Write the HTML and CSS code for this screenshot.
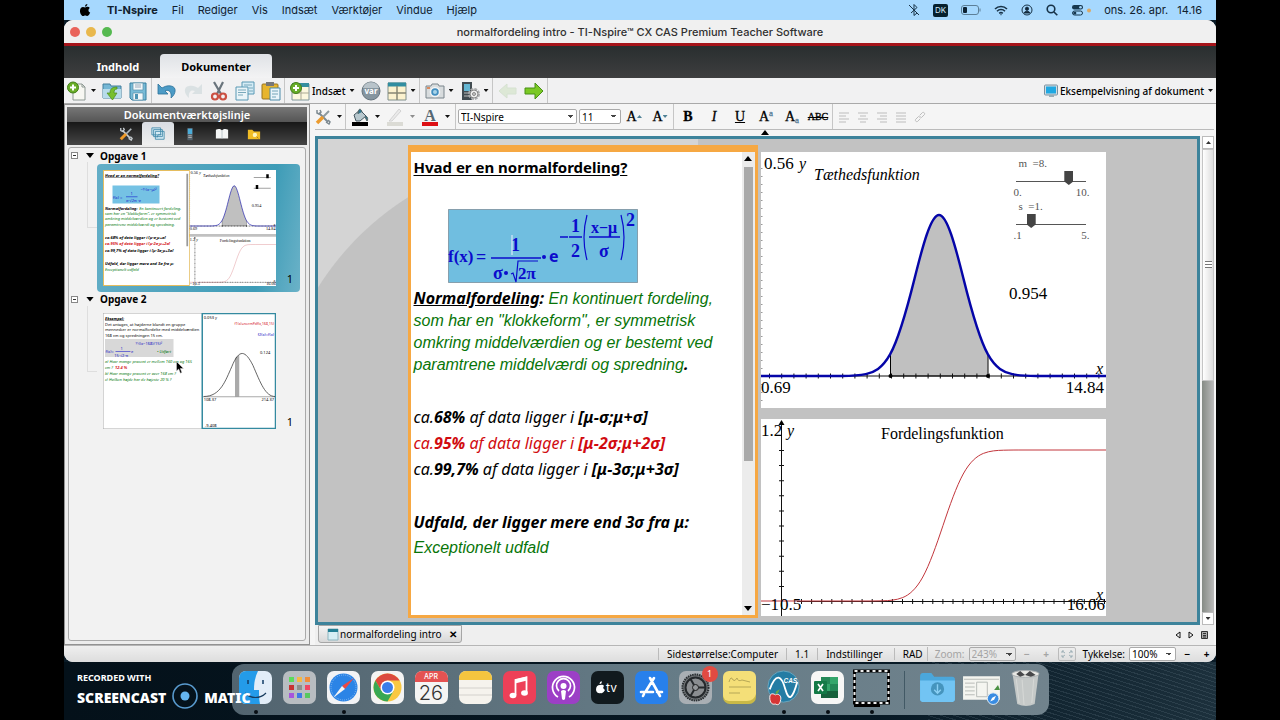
FILE: index.html
```html
<!DOCTYPE html>
<html lang="da">
<head>
<meta charset="utf-8">
<meta name="viewport" content="width=device-width, initial-scale=1">
<title>normalfordeling intro - TI-Nspire CX CAS</title>
<link rel="stylesheet" href="styles.css">
</head>
<body>
<div class="desktop">

<header class="menubar">
  <svg class="apple" viewBox="0 0 14 16" aria-label="Apple"><path d="M9.9 0c.1 1.7-1.3 3.2-2.9 3.2C6.8 1.6 8.300 .2 9.900 0zM7.200 4.200c.8 0 1.700-.8 3-.7 1.100 0 2.100.5 2.700 1.400-2.400 1.500-2 4.800.5 5.700-.6 1.700-2 4.200-3.500 4.200-1 0-1.400-.6-2.600-.6s-1.600.6-2.500.6C3 14.900.8 11.400.8 8.500c0-2.900 1.800-4.700 3.700-4.700 1.200 0 2 .4 2.700.4z"/></svg>
  <nav class="menus"><button class="app-name">TI-Nspire</button><button>Fil</button><button>Rediger</button><button>Vis</button><button>Indsæt</button><button>Værktøjer</button><button>Vindue</button><button>Hjælp</button></nav>
  <div class="tray">
    <svg width="12" height="12" viewBox="0 0 12 12" class="line"><path d="M3 3l6 6-3 2.500v-11L9 3.500 3 9M1 1l10 10"/></svg>
    <span class="keyboard">DK</span>
    <svg width="20" height="10" viewBox="0 0 20 10"><rect x=".5" y=".5" width="17" height="9" rx="2.500" fill="none" stroke="#5c7f98"/><rect x="2" y="2" width="4" height="6" rx="1" fill="#0d2233"/><path d="M19 3.500v3" stroke="#5c7f98"/></svg>
    <svg width="14" height="11" viewBox="0 0 14 11" class="line thick"><path d="M1 4a8.500 8.500 0 0 1 12 0M3 6.200a5.700 5.700 0 0 1 8 0M5.200 8.300a2.700 2.700 0 0 1 3.600 0M6.500 9.500h1"/></svg>
    <svg width="12" height="12" viewBox="0 0 12 12" class="line"><circle cx="6" cy="6" r="5"/><circle cx="6" cy="4.700" r="1.600" fill="#123"/><path d="M3 9c1-2.500 5-2.500 6 0z" fill="#123"/></svg>
    <svg width="12" height="12" viewBox="0 0 12 12" class="line thick"><circle cx="5" cy="5" r="3.800"/><path d="M8 8l3.300 3.300"/></svg>
    <svg width="20" height="12" viewBox="0 0 20 12"><rect x="1" y="1" width="11" height="4.500" rx="2.200" fill="#17384f"/><circle cx="9.500" cy="3.200" r="1.300" fill="#a5d8ff"/><rect x="1.500" y="7" width="10" height="4" rx="2" fill="none" stroke="#17384f"/><circle cx="3.800" cy="9" r="1.600" fill="#17384f"/><circle cx="18" cy="6.500" r="2" fill="#d9a968"/></svg>
    <span>ons. 26. apr.</span><span>14.16</span>
  </div>
</header>

<main class="window">
  <div class="titlebar">
    <div class="lights"><button class="close" aria-label="Luk"></button><button class="min" aria-label="Minimer"></button><button class="max" aria-label="Maksimer"></button></div>
    <h1>normalfordeling intro - TI-Nspire™ CX CAS Premium Teacher Software</h1>
  </div>
  <nav class="tabs"><button>Indhold</button><button class="active">Dokumenter</button></nav>

  <div class="toolbar">
    <div class="group first">
      <button class="drop" aria-label="Ny"><svg class="i20" viewBox="0 0 20 20"><path d="M6 3h9l3 3v13H6z" fill="#f7f7f2" stroke="#8d9893"/><path d="M15 3v3h3" fill="none" stroke="#8d9893"/><circle cx="6" cy="6.500" r="5.500" fill="#69ad27" stroke="#447e1b"/><path d="M6 3.500v6M3 6.500h6" stroke="#fff" stroke-width="2"/></svg><i class="caret"></i></button>
      <button aria-label="Åbn"><svg class="i20" viewBox="0 0 20 20"><path d="M1 3h7l1 2h10v12H1z" fill="#75b7d5" stroke="#437f9d"/><path d="M1 8h18v9H1z" fill="#b7dbea"/><path d="M15 6c-5 0-7 2-7 6H5l5.500 7L15 12h-3c0-3 1-4 3-4z" fill="#77bf2f" stroke="#4a8b20" stroke-width=".7"/></svg></button>
      <button aria-label="Gem"><svg class="i20" viewBox="0 0 20 20"><path d="M2 2h16v17H4l-2-2z" fill="#79bbd7" stroke="#377e9f"/><path d="M5 2h10v7H5zM5 12h10v7H5z" fill="#f3f7f9" stroke="#5990aa" stroke-width=".7"/><path d="M7 4h6M7 6h6" stroke="#9ab"/><path d="M7 13h3v5H7z" fill="#4c92b3"/></svg></button>
    </div>
    <div class="group">
      <button aria-label="Fortryd"><svg class="i20" viewBox="0 0 20 20"><path d="M1 3v10h10L8 10c4-2 7 1 6 7 5-4 6-11 0-12-4-1-7 1-9 2z" fill="#4c9bc6" stroke="#2c729a" stroke-width=".8"/></svg></button>
      <button aria-label="Gendan" class="off"><svg class="i20" viewBox="0 0 20 20"><path d="M19 3v10H9l3-3c-4-2-7 1-6 7C1 13 0 6 6 5c4-1 7 1 9 2z" fill="#bfcfd2"/></svg></button>
      <button aria-label="Klip"><svg class="i20" viewBox="0 0 20 20"><path d="M5 1l7 12M14 1L8 13" stroke="#69747c" stroke-width="2.200"/><circle cx="6" cy="15.500" r="3" fill="none" stroke="#cb5143" stroke-width="2.200"/><circle cx="14" cy="15.500" r="3" fill="none" stroke="#cb5143" stroke-width="2.200"/></svg></button>
      <button aria-label="Kopier"><svg class="i20" viewBox="0 0 20 20"><g stroke="#5998b4"><path d="M7 1h12v12H7z" fill="#d4ebf5"/><path d="M1 6h12v13H1z" fill="#eaf4f8"/></g><path d="M3 9h8M3 11.500h8M3 14h5M9 4h8M14 7h4M14 10h4" stroke="#79a8bb"/></svg></button>
      <button aria-label="Indsæt"><svg class="i20" viewBox="0 0 20 20"><rect x="1" y="3" width="16" height="15" rx="1" fill="#e7b52d" stroke="#987521"/><path d="M5 1h8v4H5z" fill="#777"/><path d="M9 7h10v12H9z" fill="#e9f4fa" stroke="#4d8ba9"/><path d="M11 10h6M11 13h6M11 16h4" stroke="#73a4b8"/></svg></button>
    </div>
    <div class="group">
      <button class="drop"><svg class="i20" viewBox="0 0 20 20"><path d="M2 3h17v16H2z" fill="#fcf8df" stroke="#80979a"/><path d="M2 2h17v4H2z" fill="#358e9f"/><path d="M2 12h17M11 6v13" stroke="#aaa994"/><circle cx="6" cy="7" r="5.500" fill="#68ad29" stroke="#447e1b"/><path d="M6 4v6M3 7h6" stroke="#fff" stroke-width="2"/></svg>Indsæt<i class="caret"></i></button>
      <button aria-label="Variabler"><svg class="i20" viewBox="0 0 20 20"><circle cx="10" cy="10" r="9" fill="#86959f" stroke="#65737d"/><path d="M2 7a8.500 8.500 0 0 1 16 0" fill="#b8c3ca"/><text x="10" y="13" text-anchor="middle" class="var-label">var</text></svg></button>
      <button class="drop" aria-label="Sidelayout"><svg class="i20" viewBox="0 0 20 20"><path d="M1 2h18v17H1z" fill="#fcf2ce" stroke="#81908c"/><path d="M1 1.500h18v4H1z" fill="#318da0"/><path d="M10 5v14M1 12h18" stroke="#888774" stroke-width="1.500"/></svg><i class="caret"></i></button>
    </div>
    <div class="group">
      <button class="drop" aria-label="Skærmbillede"><svg class="i20" viewBox="0 0 20 20"><path d="M1 5h5l1-2h6l1 2h5v12H1z" fill="#d8dcde" stroke="#7b858c"/><circle cx="10" cy="11" r="4.500" fill="#448fc0" stroke="#f4f4f4" stroke-width="1.500"/><circle cx="10" cy="11" r="2" fill="#a8d4e9"/><path d="M2 7h3" stroke="#dc7136" stroke-width="1.500"/></svg><i class="caret"></i></button>
      <button class="drop" aria-label="Håndholdt"><svg class="i20" viewBox="0 0 20 20"><path d="M2 1h10v18H2z" fill="#414b51"/><path d="M4 3h6v7H4z" fill="#64b6d3"/><path d="M4 12h6M4 15h6" stroke="#bbb"/><circle cx="14" cy="13" r="4.500" fill="none" stroke="#a9abad" stroke-width="3" stroke-dasharray="2.500 1"/><circle cx="14" cy="13" r="4" fill="#eee" stroke="#888"/><circle cx="14" cy="13" r="1.500" fill="#ccc" stroke="#888"/></svg><i class="caret"></i></button>
    </div>
    <div class="group">
      <button class="off" aria-label="Forrige"><svg class="i20" viewBox="0 0 20 20"><path d="M1 10l8-7v4h9v6H9v4z" fill="#c5dfb5" stroke="#b7cfaa"/></svg></button>
      <button aria-label="Næste"><svg class="i20" viewBox="0 0 20 20"><path d="M19 10l-8-8v5H1v6h10v5z" fill="#7bc925" stroke="#499017"/></svg></button>
    </div>
    <button class="preview"><svg width="14" height="14" viewBox="0 0 14 14"><rect x=".5" y="1" width="13" height="10" rx="1" fill="#d3dde2" stroke="#7b91a0"/><path d="M2 2.500h10v7H2z" fill="#20a8e2"/><path d="M5 11v2h5v-2" fill="#9aaeb7"/></svg>Eksempelvisning af dokument<i class="caret"></i></button>
  </div>

  <div class="workspace">
    <aside class="sidebar">
      <h2>Dokumentværktøjslinje</h2>
      <div class="side-tabs">
        <button aria-label="Værktøjer"><svg class="i14" viewBox="0 0 16 16"><path d="M4 4l9 9" stroke="#c7cdd1" stroke-width="2"/><path d="M2 1l0 3 2 1 2-2-1-2M11 13l3 2 1-2-2-2" stroke="#c7cdd1" stroke-width="1.500" fill="none"/><path d="M14 2L8 8" stroke="#b0b8bd" stroke-width="2"/><path d="M8 8l-6 6" stroke="#ef9a28" stroke-width="3.500"/></svg></button>
        <button class="active" aria-label="Sidesortering"><svg class="i14" viewBox="0 0 16 16"><g fill="#d6ebf4" stroke="#438aaa"><path d="M1 1h10v8H1zM3 3h10v8H3zM5 5h10v9H5z"/></g><path d="M7 12c2-7 3-1 5-4" fill="none" stroke="#438aaa"/></svg></button>
        <button aria-label="Emulator"><svg class="i14" viewBox="0 0 16 16"><path d="M5 1h6v14H5z" fill="#54626c"/><path d="M5.500 2h5v6h-5z" fill="#4bacd9"/><path d="M6 10h4M6 12h4" stroke="#b7b7b7"/></svg></button>
        <button aria-label="Bibliotek"><svg class="i14" viewBox="0 0 16 16"><path d="M1 3c3-1 5-1 7 1 2-2 4-2 7-1v10H1z" fill="#f4f6f6"/><path d="M8 4v9" stroke="#b5c0c5"/></svg></button>
        <button aria-label="Indholdsstifinder"><svg class="i14" viewBox="0 0 16 16"><path d="M1 3h5l2 2h7v9H1z" fill="#f1bd25"/><circle cx="9" cy="9" r="2.500" fill="#fff6bc"/><path d="M11 11l2 2" stroke="#a87a13"/></svg></button>
      </div>
      <div class="tree">
        <section class="problem">
          <button class="heading"><span class="minus"></span><i class="disclose"></i>Opgave 1</button>
          <div class="thumb selected">
            <svg class="preview-page" viewBox="0 0 692 464">
              <rect width="692" height="464" fill="#c1c1c1"/><rect x="2" y="2" width="344" height="460" fill="#fff" stroke="#e5bd5f" stroke-width="4"/><path d="M337 15v290" stroke="#999" stroke-width="7"/>
              <rect x="38" y="62" width="188" height="72" fill="#75c2e4"/>
              <g class="thumb-text"><text x="8" y="26" class="b u">Hvad er en normalfordeling?</text>
              <text x="40" y="116" class="math">f(x) =</text><path d="M92 107h46" stroke="#00c" stroke-width="2"/><text x="110" y="101" class="math">1</text><text x="92" y="129" class="math">σ·√2π ·e</text><text x="150" y="85" class="math">−½(x−μ)²</text>
              <text x="8" y="158" class="b">Normalfordeling:</text><text x="145" y="158" class="green">En kontinuert fordeling,</text><text x="8" y="179" class="green">som har en "klokkeform", er symmetrisk</text><text x="8" y="201" class="green">omkring middelværdien og er bestemt ved</text><text x="8" y="223" class="green">paramtrene middelværdi og spredning.</text>
              <text x="8" y="274" class="b">ca.68% af data ligger i [μ−σ;μ+σ]</text><text x="8" y="300" class="red">ca.95% af data ligger i [μ−2σ;μ+2σ]</text><text x="8" y="326" class="b">ca.99,7% af data ligger i [μ−3σ;μ+3σ]</text><text x="8" y="378" class="b">Udfald, der ligger mere end 3σ fra μ:</text><text x="8" y="404" class="green">Exceptionelt udfald</text></g>
              <g transform="translate(347 0)"><rect width="345" height="256" fill="#fff"/><use href="#density"/><path d="M256 30h68M256 73h68" stroke="#444" stroke-width="2"/><path d="M306 17h10v16h-10zM264 60h10v16h-10z"/></g>
              <g transform="translate(347 267)"><rect width="345" height="197" fill="#fff"/><use href="#cumulative"/></g>
            </svg><span class="page-no">1</span>
          </div>
        </section>
        <section class="problem">
          <button class="heading"><span class="minus"></span><i class="disclose"></i>Opgave 2</button>
          <div class="thumb">
            <svg class="preview-page" viewBox="0 0 692 464">
              <rect width="692" height="464" fill="#fff" stroke="#aaa" stroke-width="4"/><rect x="397" y="2" width="293" height="460" fill="#fff" stroke="#348aa0" stroke-width="6"/><rect x="8" y="104" width="274" height="72" fill="#d8d8d8"/>
              <g class="thumb-text"><text x="8" y="26" class="b u">Eksempel:</text><text x="8" y="52">Det antages, at højderne blandt en gruppe</text><text x="8" y="73">mennesker er normalfordelte med middelværdien</text><text x="8" y="95">168 cm og spredningen 15 cm.</text>
              <text x="10" y="158" class="math">f(x)=</text><path d="M50 154h60" stroke="#00c" stroke-width="2"/><text x="70" y="148" class="math">1</text><text x="45" y="174" class="math">15·√2·π</text><text x="112" y="158" class="math">e</text><text x="130" y="128" class="math">½((x−168)/15)²</text><text x="216" y="160" class="green">• Udført</text>
              <text x="8" y="201" class="green">a) Hvor mange procent er mellem 160 cm og 165</text><text x="8" y="223" class="green">cm ?</text><text x="48" y="223" class="red">12.4 %</text><text x="8" y="247" class="green">b) Hvor mange procent er over 168 cm ?</text><text x="8" y="273" class="green">c) Hvilken højde har de højeste 20 % ?</text>
              <text x="403" y="24">0.053 y</text><text x="684" y="47" text-anchor="end" class="red light">f1(x)=normPdf(x,168,15)</text><text x="684" y="90" text-anchor="end" class="math">f2(x)=f(x)</text><text x="628" y="165">0.124</text><text x="403" y="351">108.37</text><text x="684" y="351" text-anchor="end">214.37</text><text x="408" y="456">-9.408</text></g>
              <path d="M528 334V180l17-12v166z" fill="#aaa"/><path d="M403 334C470 334 490 270 515 215 545 140 570 150 600 210 630 280 650 334 688 334" fill="none" stroke="#333" stroke-width="3"/><path d="M400 335h288" stroke="#555" stroke-width="2"/>
            </svg><span class="page-no">1</span>
          </div>
          <svg class="pointer" viewBox="0 0 8 13"><path d="M.5.500v9.500l2.200-2 1.700 4.200 1.500-.7L4.300 7.500h3.200z" stroke="#ddd" stroke-width=".5"/></svg>
        </section>
      </div>
    </aside>

    <section class="editor">
      <div class="format">
        <div class="group first"><button class="drop" aria-label="Egenskaber"><svg class="i16" viewBox="0 0 16 16"><path d="M4 4l9 9" stroke="#7d8a91" stroke-width="2"/><path d="M2 1l0 3 2 1 2-2-1-2M11 13l3 2 1-2-2-2" stroke="#7d8a91" stroke-width="1.500" fill="none"/><path d="M14 2L8 8" stroke="#8c999f" stroke-width="2"/><path d="M8 8l-6 6" stroke="#ec9b2e" stroke-width="3.500"/></svg><i class="caret"></i></button></div>
        <div class="group colours">
          <button class="drop" aria-label="Fyldfarve"><svg class="i18" viewBox="0 0 18 18"><path d="M3 7l6-5 6 6-6 5H5z" fill="#b8c8ce" stroke="#44565f"/><path d="M7 6c0-6 3-6 4-2M15 8c2 1 2 4 1 5l-2-4" fill="#32758d" stroke="#566"/><path d="M1 14h16v4H1z"/></svg><i class="caret"></i></button>
          <button class="drop off" aria-label="Linjefarve"><svg class="i18" viewBox="0 0 18 18"><path d="M4 12L13 1l2 2-9 10H3z" fill="#ddd" stroke="#aaa"/><path d="M1 14h16v4H1z" fill="#bdbdaf"/></svg><i class="caret"></i></button>
          <button class="drop" aria-label="Tekstfarve"><svg class="i18" viewBox="0 0 18 18"><text x="9" y="13" text-anchor="middle" class="letter">A</text><path d="M1 14h16v4H1z" fill="#dd1014"/></svg><i class="caret"></i></button>
        </div>
        <div class="group fonts"><select class="font-name" aria-label="Skrifttype"><option>TI-Nspire</option></select><select class="font-size" aria-label="Skriftstørrelse"><option>11</option></select><button class="key" aria-label="Større skrift">A<i class="tiny up"></i></button><button class="key" aria-label="Mindre skrift">A<i class="tiny"></i></button></div>
        <div class="group keys"><button class="key"><b>B</b></button><button class="key"><em>I</em></button><button class="key"><u>U</u></button><button class="key">A<sup>a</sup></button><button class="key">A<sub>a</sub></button><button class="key strike">ABC</button></div>
        <div class="group align">
          <button aria-label="Venstre"><svg class="i12" viewBox="0 0 12 12"><path d="M1 2h10M1 5h7M1 8h10M1 11h7"/></svg></button><button aria-label="Centrer"><svg class="i12" viewBox="0 0 12 12"><path d="M1 2h10M3 5h6M1 8h10M3 11h6"/></svg></button><button aria-label="Højre"><svg class="i12" viewBox="0 0 12 12"><path d="M1 2h10M4 5h7M1 8h10M4 11h7"/></svg></button><button aria-label="Lige"><svg class="i12" viewBox="0 0 12 12"><path d="M1 2h10M1 5h10M1 8h10M1 11h10"/></svg></button><button aria-label="Link"><svg class="i12" viewBox="0 0 12 12"><path d="M6 4l2.500-2.500a1.500 1.500 0 0 1 2 2L7.500 6.500a1.500 1.500 0 0 1-2 0M6 8l-2.500 2.500a1.500 1.500 0 0 1-2-2L4.500 5.500a1.500 1.500 0 0 1 2 0"/></svg></button>
        </div>
      </div>
      <div class="fold"><i class="disclose up"></i></div>

      <div class="doc-row">
        <div class="canvas">
          <div class="page">
            <article class="note">
              <div class="note-body">
                <h3>Hvad er en normalfordeling?</h3>
                <svg class="formula" viewBox="0 0 190 74" role="img" aria-label="Tæthedsfunktionens formel">
                  <rect x=".5" y=".5" width="189" height="73" fill="#70bee0" stroke="#55616b" stroke-dasharray="1 1"/>
                  <text x="0" y="53" class="thin">f(x)</text><text x="28" y="54">=</text><text x="63" y="42">1</text><path d="M43 49h50" class="bar"/><text x="45" y="70">σ</text><circle cx="58" cy="64" r="2"/><path d="M63 65l2-1 3 9 2-21h20" class="root"/><text x="70" y="70" class="thin">2π</text><circle cx="96" cy="48" r="2"/><text x="101" y="53" class="e">e</text>
                  <path d="M112 28h8M121 28h13M141 28h31" class="bar"/><text x="123" y="23">1</text><text x="123" y="48">2</text><text x="143" y="24" class="small">x−μ</text><text x="151" y="48">σ</text><path d="M139 6q-6 22 0 45M173 6q6 22 0 45" class="root"/><text x="178" y="17">2</text><path d="M64 26v20" stroke="#eef" stroke-width="1"/>
                </svg>
                <p class="intro"><b><u>Normalfordeling</u>:</b> En kontinuert fordeling, som har en "klokkeform", er symmetrisk omkring middelværdien og er bestemt ved paramtrene middelværdi og spredning<b>.</b></p>
                <p class="rule">ca.<b>68%</b> af data ligger i <b>[μ−σ;μ+σ]</b></p>
                <p class="rule alert">ca.<b>95%</b> af data ligger i <b>[μ−2σ;μ+2σ]</b></p>
                <p class="rule">ca.<b>99,7%</b> af data ligger i <b>[μ−3σ;μ+3σ]</b></p>
                <p class="rule outlier"><b>Udfald, der ligger mere end 3σ fra μ:</b></p>
                <p class="rule answer">Exceptionelt udfald</p>
              </div>
              <div class="note-scroll"><i class="disclose up"></i><span class="bar-thumb"></span><i class="disclose"></i></div>
            </article>
            <div class="graphs">
              <div class="graph">
                <svg viewBox="0 0 345 256"><g id="density" class="plot">
                  <path d="M129.200 224V202.200C137.300 187.700 145.500 158.900 153.600 126.400 161.700 93.900 169.900 63 178 63 186.100 63 194.300 93.900 202.400 126.400 210.500 158.900 218.700 187.700 226.800 202.200V224z" fill="#c0c0c0"/>
                  <path d="M129.500 202v22M227 202v22" stroke="#000"/><path d="M0 224h345" stroke="#111"/>
                  <path d="M8 224h337" stroke="#111" stroke-width="5" stroke-dasharray="1 11.200"/><path d="M0 16v240" stroke="#999" stroke-width="3" stroke-dasharray="1 7"/>
                  <path d="M0 224H80.400C88.500 224 96.700 224 104.800 222.200 112.900 220.400 121.100 216.700 129.200 202.200 137.300 187.700 145.500 158.900 153.600 126.400 161.700 93.900 169.900 63 178 63 186.100 63 194.300 93.900 202.400 126.400 210.500 158.900 218.700 187.700 226.800 202.200 234.900 216.700 243.100 220.400 251.200 222.200 259.300 224 267.500 224 275.600 224H345" fill="none" stroke="#0505a8" stroke-width="2.400"/>
                  <path d="M130 224h97" stroke="#111"/><circle cx="129.500" cy="224" r="2"/><circle cx="227" cy="224" r="2"/>
                  <text x="3" y="17">0.56</text><text x="38" y="17" class="it">y</text><text x="53" y="28" class="it">Tæthedsfunktion</text><text x="248" y="147">0.954</text><text x="335" y="222" class="it">x</text><text x="0" y="241">0.69</text><text x="343" y="241" text-anchor="end">14.84</text>
                </g></svg>
                <div class="sliders">
                  <label for="mean">m &nbsp;=8.</label><input id="mean" type="range" min="0" max="10" value="8" step="0.1"><div class="limits"><span>0.</span><span>10.</span></div>
                  <label for="spread">s &nbsp;=1.</label><input id="spread" type="range" min="0.1" max="5" value="1" step="0.1"><div class="limits"><span>.1</span><span>5.</span></div>
                </div>
              </div>
              <div class="graph">
                <svg viewBox="0 0 345 197"><g id="cumulative" class="plot">
                  <path d="M20.500 2v195M36 182.500h309" stroke="#111"/><path d="M20.500 1l3 5h-6z"/><path d="M20.500 31v151" stroke="#111" stroke-width="5" stroke-dasharray="1 14.100"/><path d="M40 182.500h305" stroke="#111" stroke-width="5" stroke-dasharray="1 9.100"/>
                  <path d="M0 182H101C108 182 114.700 182 121.400 181.800 128.100 181.600 134.900 181.300 141.600 178.600 148.300 175.900 155.100 170.200 161.800 158 168.500 145.800 175.300 126.500 182 106.500 188.700 86.500 195.500 67.200 202.200 55 208.900 42.800 215.700 37.100 222.400 34.400 229.100 31.700 235.900 31.400 242.600 31.200 250 31 256 31 263 31H345" fill="none" stroke="#c2363c"/>
                  <text x="0" y="17">1.2</text><text x="26" y="17" class="it">y</text><text x="120" y="20" class="caption">Fordelingsfunktion</text><text x="335" y="181" class="it">x</text><text x="0" y="191">−1</text><text x="19" y="191">0.5</text><text x="344" y="191" text-anchor="end">16.06</text>
                </g></svg>
              </div>
            </div>
          </div>
        </div>
        <div class="scrollbar"><button aria-label="Op"><i class="tiny dark up"></i></button><div class="track"><span></span></div><button aria-label="Ned"><i class="tiny dark"></i></button></div>
      </div>
      <div class="doc-tabs">
        <button class="doc-tab"><svg width="12" height="13" viewBox="0 0 12 13"><path d="M1 1h10v11H1z" fill="#d7eef4" stroke="#8db5bf"/><path d="M1 1h10v3H1z" fill="#247f94"/></svg>normalfordeling intro<span>✕</span></button>
        <div class="tab-nav"><button aria-label="Forrige fane"><svg width="6" height="8" viewBox="0 0 6 8"><path d="M5 1v6L1 4z" fill="none" stroke="#111"/></svg></button><button aria-label="Næste fane"><svg width="6" height="8" viewBox="0 0 6 8"><path d="M1 1v6l4-3z" fill="none" stroke="#111"/></svg></button><button aria-label="Faneliste"><svg width="8" height="8" viewBox="0 0 8 8"><path d="M.5.500h6v7h-6zM2 2.500h3M2 4.500h3M2 6h3" fill="#aaa" stroke="#333"/></svg></button></div>
      </div>
    </section>
  </div>

  <footer class="status">
    <span>Sidestørrelse:Computer</span><span>1.1</span><span class="settings">Indstillinger</span><span class="angle">RAD</span>
    <div class="zoom muted"><label for="zoom">Zoom:</label><select id="zoom" disabled><option>243%</option></select><button disabled>−</button><button disabled>+</button></div>
    <button class="fit" aria-label="Tilpas"><svg width="12" height="8" viewBox="0 0 12 8"><path d="M1 3V1h2M9 1h2v2M11 5v2H9M3 7H1V5M1 1l3 2M11 1L8 3M11 7L8 5M1 7l3-2" fill="none" stroke="#9eb0b7"/></svg></button>
    <div class="zoom"><label for="weight">Tykkelse:</label><select id="weight"><option>100%</option></select><button>−</button><button>+</button></div>
  </footer>
</main>

<div class="dock-area">
  <div class="dock">
    <button class="app running" aria-label="Finder"><svg viewBox="0 0 33 33"><rect width="33" height="33" rx="7" fill="#e2edf8"/><path d="M7 0h12c-3 6-4 12-4 19h5c0 5 0 9 1 14H7a7 7 0 0 1-7-7V7a7 7 0 0 1 7-7z" fill="#249be9"/><path d="M9 9v4M24 9v4" stroke="#123c65" stroke-width="1.500"/><path d="M6 22c6 6 15 6 21 0" stroke="#173b5d" fill="none" stroke-width="1.200"/></svg></button>
    <button class="app" aria-label="Launchpad"><svg viewBox="0 0 33 33"><rect width="33" height="33" rx="7" fill="#b8bdc1"/><g><path d="M6 6h5v5H6z" fill="#5bdc5b"/><path d="M14 6h5v5h-5z" fill="#f5b843"/><path d="M22 6h5v5h-5z" fill="#f08d3a"/><path d="M6 14h5v5H6z" fill="#c83232"/><path d="M14 14h5v5h-5z" fill="#8f8e8a"/><path d="M22 14h5v5h-5z" fill="#ef4764"/><path d="M6 22h5v5H6z" fill="#a755dd"/><path d="M14 22h5v5h-5z" fill="#3e79e7"/><path d="M22 22h5v5h-5z" fill="#57c85f"/></g></svg></button>
    <button class="app running" aria-label="Safari"><svg viewBox="0 0 33 33"><rect width="33" height="33" rx="7" fill="#f2f3f5"/><circle cx="16.500" cy="16.500" r="14" fill="#2b84e6"/><circle cx="16.500" cy="16.500" r="12.500" fill="none" stroke="#b5d8fa" stroke-dasharray=".6 1.400"/><path d="M27 7L15 15l3 3z" fill="#ed4843"/><path d="M6 27l9-12 3 3z" fill="#f5f5f5"/></svg></button>
    <button class="app" aria-label="Chrome"><svg viewBox="0 0 33 33"><rect width="33" height="33" rx="7" fill="#f4f4f3"/><circle cx="16.500" cy="16.500" r="14" fill="#f9c842"/><path d="M4.400 9.500A14 14 0 0 1 28.600 9.500H16.500L10.500 20z" fill="#dc4a3e"/><path d="M4.400 9.500A14 14 0 0 0 16.500 30.500L22.500 20H10.500z" fill="#38a853"/><circle cx="16.500" cy="16.500" r="7" fill="#fff"/><circle cx="16.500" cy="16.500" r="5.500" fill="#3b7de9"/></svg></button>
    <button class="app calendar"><small>APR</small><span>26</span></button>
    <button class="app" aria-label="Noter"><svg viewBox="0 0 33 33"><rect width="33" height="33" rx="7" fill="#f5f3ed"/><path d="M0 9V7a7 7 0 0 1 7-7h19a7 7 0 0 1 7 7v2z" fill="#f4c53f"/><path d="M0 17h33M0 24h33" stroke="#d3d1cc"/></svg></button>
    <button class="app" aria-label="Musik"><svg viewBox="0 0 33 33"><rect width="33" height="33" rx="7" fill="#ed4058"/><path d="M12.500 24V9l11-2.500V21" fill="none" stroke="#fff" stroke-width="1.800"/><path d="M12 8.500l12-3v4l-12 3z" fill="#fff"/><ellipse cx="10" cy="24.500" rx="3.400" ry="2.700" fill="#fff"/><ellipse cx="21.500" cy="22" rx="3.400" ry="2.700" fill="#fff"/></svg></button>
    <button class="app" aria-label="Podcasts"><svg viewBox="0 0 33 33"><rect width="33" height="33" rx="7" fill="#9c3fc6"/><path d="M11 26a11 11 0 1 1 11 0M12 20a7 7 0 1 1 9 0" fill="none" stroke="#fff" stroke-width="1.700"/><circle cx="16.500" cy="15" r="3" fill="#fff"/><path d="M14 20q2.500-2 5 0l-1 8q-1.500 2-3 0z" fill="#fff"/></svg></button>
    <button class="app" aria-label="Apple TV"><svg viewBox="0 0 33 33"><rect width="33" height="33" rx="7" fill="#111a1e"/><path d="M10.500 10q1 3-2 3 0-2 2-3zM9 14q3-1 4 1-2 2 1 4-2 4-4 3-4 1-5-3 0-5 4-5z" fill="#fff"/><text x="15" y="21" class="tv">tv</text></svg></button>
    <button class="app" aria-label="App Store"><svg viewBox="0 0 33 33"><rect width="33" height="33" rx="7" fill="#2880eb"/><path d="M15 7l10 18M19 7L11 20M9 23l-1 2M6 21h12M22 21h5" stroke="#fff" stroke-width="2.600" stroke-linecap="round"/></svg></button>
    <button class="app" aria-label="Indstillinger"><svg viewBox="0 0 33 33"><rect width="33" height="33" rx="7" fill="#a9afb4"/><circle cx="16.500" cy="16.500" r="13" fill="#727679" stroke="#292e31" stroke-width="2" stroke-dasharray="1.500 .8"/><circle cx="16.500" cy="16.500" r="10" fill="#8b8e91" stroke="#25292c" stroke-width="2"/><path d="M16.500 16.500h10M16.500 16.500l-5-8.500M16.500 16.500l-5 8.500" stroke="#25292c" stroke-width="2"/><circle cx="16.500" cy="16.500" r="3" fill="#94979a" stroke="#222"/></svg><span class="badge">1</span></button>
    <button class="app" aria-label="Memoer"><svg viewBox="0 0 33 33"><rect y="2" width="33" height="31" rx="7" fill="#c9b947"/><path d="M6 0h21a6 6 0 0 1 6 6v17q-2 7-9 7H6a6 6 0 0 1-6-6V6a6 6 0 0 1 6-6z" fill="#f4df78"/><path d="M6 11q2-7 4-2 2 2 4-2 1 4 5 2l8 2M6 16h22M6 22h11" stroke="#b6a756" fill="none"/></svg></button>
    <button class="app running" aria-label="TI-Nspire CAS"><svg viewBox="1 0 34 36"><circle cx="18" cy="17" r="17" fill="#247ca4" stroke="#6ca9c1"/><path d="M3 20C10 1 16 5 20 20c4 14 8 10 13-8" fill="none" stroke="#fff" stroke-width="2"/><text x="18" y="13" class="cas">CAS</text><path d="M3 29c0-6 5-4 6-3 3-2 7 1 6 5-1 7-4 6-6 5-3 1-6-1-6-7z" fill="#d63636" stroke="#fff"/><path d="M9 26l1-4 4-2-2 4z" fill="#66a94a"/></svg></button>
    <button class="app running" aria-label="Excel"><svg viewBox="0 0 33 33"><rect width="33" height="33" rx="7" fill="#f7f7f6"/><path d="M10 6h17v21H10z" fill="#248857"/><path d="M19 6h8v7h-8zM10 13h9v7h-9z" fill="#34a66b"/><path d="M10 20h17v7H10z" fill="#17623c"/><rect x="3" y="10" width="13" height="13" rx="1" fill="#137a46"/><path d="M7 13l5 7M12 13l-5 7" stroke="#fff" stroke-width="1.700"/></svg></button>
    <button class="app running capture" aria-label="Screencast-optager"><svg viewBox="0 0 37 38"><path d="M1 34h26v4H1z"/><rect x="1.500" y="2" width="34" height="32" fill="none" stroke="#000" stroke-width="3"/><rect x="1.500" y="2" width="34" height="32" fill="none" stroke="#eee" stroke-width="2" stroke-dasharray="3 3"/></svg></button>
    <hr>
    <button class="app" aria-label="Overførsler"><svg viewBox="1 0 35 33"><path d="M0 5q0-4 3-4h9l3 4h19q3 0 3 3v20q0 4-4 4H4q-4 0-4-4z" fill="#4ba7db"/><path d="M0 9h37v20q0 3-4 3H4q-4 0-4-3z" fill="#72c4f3"/><circle cx="18.500" cy="18" r="7" fill="#4594bd"/><path d="M18.500 13v9M15 19l3.500 3.500L22 19" fill="none" stroke="#8bd0f4" stroke-width="1.500"/></svg></button>
    <button class="app" aria-label="Safari-vindue"><svg viewBox="2 0 34 33"><path d="M0 5h38v24H0z" fill="#f4f5f0"/><path d="M1 8h36M2 12h10M2 16h10M2 20h10M2 24h10M14 11h11v15H14z" stroke="#b7bbb7" fill="none"/><path d="M32 19l4-5 2 5z" fill="#4b9143"/><circle cx="31" cy="28" r="6" fill="#398ce2" stroke="#e6edf1"/><path d="M28 31l2-4 4-2-2 4z" fill="#fff"/></svg></button>
    <button class="app" aria-label="Papirkurv"><svg viewBox="0 1 31 34"><path d="M2 3h27l-4 32q-9 4-18 0z" fill="#c5c9c8"/><path d="M6 9l3 25M12 10l2 26M24 9l-2 25" stroke="#d7d9d7"/><ellipse cx="15.500" cy="4" rx="14" ry="3.500" fill="#e8e9e5" stroke="#aab0b2"/><path d="M6 4l4-3 5 4 5-4 6 4-5 2-6-2-5 2z" fill="#47484a"/></svg></button>
  </div>
  <div class="watermark"><span>RECORDED WITH</span><strong>SCREENCAST <svg viewBox="0 0 28 28"><circle cx="14" cy="14" r="12" fill="none" stroke="#599bcf" stroke-width="1.600"/><circle cx="14" cy="14" r="4.500" fill="#65b5ef"/></svg> MATIC</strong></div>
</div>
</div>
</body>
</html>
```

FILE: styles.css
```css
* { box-sizing: border-box; }
body { margin: 0; background: #000; color: #000; font-family: "Noto Sans", "Open Sans", sans-serif; font-size: 10px; }
button { display: inline-flex; align-items: center; justify-content: center; margin: 0; padding: 0; border: 0; background: none; color: inherit; font: inherit; }
h1, h2, h3, p { margin: 0; }
svg { display: block; flex: none; }
.desktop { display: flex; flex-direction: column; min-height: 100vh; margin: 0 5%; background: #0a1b27; }

.menubar { display: flex; align-items: center; height: 20px; padding: 0 14px 0 15px; background: #a6d8fe; color: #10212f; font: 11px Inter, sans-serif; }
.apple { width: 12px; height: 13px; }
.menus { display: flex; gap: 14px; margin-left: 16px; }
.app-name { font-weight: 700; }
.tray { display: flex; align-items: center; gap: 13px; margin-left: auto; white-space: nowrap; }
.tray span:last-child { margin-left: -4px; }
.keyboard { padding: 1px 2px; border-radius: 2px; background: #06202e; color: #d7ecf9; font-size: 8px; line-height: 11px; }
.line { fill: none; stroke: #173247; }
.thick { stroke-width: 1.6; }

.window { display: flex; flex: 1; flex-direction: column; overflow: hidden; border-radius: 9px; background: #f0f0f0; }
.titlebar { position: relative; display: flex; align-items: center; justify-content: center; height: 23px; background: #f0f0f0; }
.titlebar h1 { color: #303030; font: 500 11px Inter, sans-serif; }
.lights { position: absolute; left: 6px; display: flex; gap: 6px; }
.lights button { width: 10px; height: 10px; border-radius: 50%; }
.close { background: #e9635a; }
.min { background: #e9b84c; }
.max { background: #55b950; }
.tabs { display: flex; align-items: flex-end; height: 35px; padding-left: 12px; border-top: 3px solid #a5141a; background: linear-gradient(#292e2f, #3e3e3f); color: #fff; font-size: 11px; font-weight: 700; }
.tabs button { width: 84px; height: 24px; }
.tabs .active { width: 112px; border-radius: 4px 4px 0 0; background: linear-gradient(#dfe2e6, #f3f3f4); color: #000; }

.toolbar { display: flex; height: 26px; border-bottom: 1px solid #a9a9a9; background: #f1f1f2; }
.group { display: flex; align-items: center; gap: 6px; padding: 0 3px 0 5px; border-right: 1px solid #c6c6c6; }
.group.first { padding-left: 3px; }
.drop { gap: 2px; font-weight: 500; }
.i20 { width: 20px; height: 20px; }
.i18 { width: 18px; height: 18px; overflow: visible; }
.i16 { width: 16px; height: 16px; }
.i14 { width: 14px; height: 14px; }
.i12 { width: 12px; height: 12px; fill: none; stroke: #bdbdbd; }
.caret { width: 5px; height: 3px; margin-left: 2px; background: #111; clip-path: polygon(0 0, 100% 0, 50% 100%); }
.off { opacity: .45; }
.var-label { fill: #fff; font: 700 8px "Noto Sans", sans-serif; }
.letter { fill: #566873; font: 700 16px/16px "Liberation Serif", serif; }
.preview { gap: 2px; margin-left: auto; padding-right: 3px; font-weight: 500; }

.workspace { display: grid; flex: 1; grid-template-columns: 246px minmax(0, 1fr); gap: 5px; padding-right: 2px; background: #f5f5f5; }
.sidebar { display: flex; flex-direction: column; padding: 2px; border: 1px solid #929292; background: #ececec; }
.sidebar h2 { background: linear-gradient(#777, #555); color: #fff; font-size: 11px; font-weight: 600; line-height: 15px; text-align: center; }
.side-tabs { display: flex; justify-content: center; height: 23px; padding-left: 6px; background: linear-gradient(#171717, #454545); }
.side-tabs button { width: 32px; }
.side-tabs .active { border-radius: 3px 3px 0 0; background: linear-gradient(#d9dde3, #efefef); }
.tree { flex: 1; margin: 2px 1px 1px; border: 1px solid #aaa; border-radius: 3px; background: #f2f2f2; }
.problem { position: relative; }
.problem::before { position: absolute; top: 14px; left: 18px; width: 9px; height: 65px; border: solid #dedede; border-width: 0 0 1px 1px; content: ""; }
.heading { height: 14px; gap: 8px; padding-left: 2px; font-size: 10px; font-weight: 700; }
.minus { width: 7px; height: 7px; border: 1px solid #888; background: linear-gradient(#333, #333) center / 3px 1px no-repeat #fff; }
.disclose { width: 8px; height: 5px; background: #000; clip-path: polygon(0 0, 100% 0, 50% 100%); }
.disclose.up, .tiny.up { transform: rotate(180deg); }
.heading .disclose { margin-right: -2px; }
.thumb { display: flex; align-items: flex-end; margin: 1px 5px 0 28px; padding: 6px; border-radius: 4px; }
.thumb.selected { background: linear-gradient(100deg, #64aec7, #3e9cb7 80%, #6bb2c8); }
.preview-page { width: 173px; height: 116px; }
.page-no { margin: 0 auto; padding-left: 10px; font-size: 11px; line-height: 14px; }
.thumb-text { font: 16px "Noto Sans", sans-serif; }
.thumb-text .b { font-style: italic; font-weight: 700; }
.thumb-text .u { text-decoration: underline; }
.green { fill: #087a12; font-style: italic; }
.red { fill: #d41217; font-style: italic; font-weight: 700; }
.red.light { font-style: normal; font-weight: 400; font-size: 14px; }
.math { fill: #1212c4; }
.pointer { position: absolute; top: 69px; left: 107px; width: 8px; height: 13px; }

.editor { display: flex; flex-direction: column; min-width: 0; }
.format { display: flex; height: 26px; border-bottom: 1px solid #bbb; }
.format .first { padding-left: 0; }
.colours .drop, .format .first .drop { gap: 4px; }
.group.colours { padding-right: 5px; }
.group.fonts { gap: 0; padding: 0 0 0 2px; }
.group.keys { gap: 0; padding: 0 1px; }
select { height: 15px; padding: 0 2px; border: 1px solid #aaa; border-radius: 2px; appearance: none; background: linear-gradient(45deg, transparent 50%, #444 50%) right 6px center / 3px 3px no-repeat, linear-gradient(-45deg, transparent 50%, #444 50%) right 3px center / 3px 3px no-repeat, #fff; color: inherit; font: 10px "Noto Sans", sans-serif; line-height: 12px; }
.font-name { width: 119px; }
.font-size { width: 42px; margin-left: 2px; }
.key { width: 26px; height: 20px; font: 14px "Liberation Serif", serif; -webkit-text-stroke: .3px; }
.key sup, .key sub { color: #557c95; font-size: 9px; }
.key sup { margin-top: -7px; }
.key sub { margin-top: 7px; }
.key u { text-decoration-thickness: 1px; }
.key.strike { font-size: 10px; text-decoration: line-through; }
.tiny { width: 5px; height: 3px; background: #4f8296; clip-path: polygon(0 0, 100% 0, 50% 100%); }
.tiny.dark { background: #333; }
.align { gap: 7px; border: 0; }
.fold { height: 6px; padding-left: 446px; }
.fold .disclose { display: block; }

.doc-row { display: flex; flex: 1; gap: 2px; }
.canvas { flex: 1; min-width: 0; padding: 6px 4px 4px 2px; border: 3px solid #3d839b; background: radial-gradient(circle at 242px 300px, #c2c2c2 285px, #d4d4d4 286px) left top / 380px 300px no-repeat #c2c2c2; }
.page { display: grid; grid-template-columns: minmax(0, 350fr) minmax(0, 345fr); gap: 3px; max-width: 698px; height: 100%; margin: 0 auto; }
.note { display: flex; border: 3px solid #f6a843; border-top-width: 7px; background: #fff; }
.note-body { flex: 1; padding: 4px 8px 4px 3px; font-size: 16px; }
.note h3 { font-size: 15px; line-height: 22px; text-decoration: underline; text-underline-offset: 2px; }
.formula { width: 190px; height: 74px; margin: 31px 0 5px 34px; fill: #0b0bcc; font: 700 18px "Liberation Serif", serif; }
.formula .bar { stroke: #0b0bcc; stroke-width: 1.5; }
.formula .root { fill: none; stroke: #0b0bcc; stroke-width: 1.2; }
.formula .e { font-family: "Noto Sans", sans-serif; font-size: 16px; }
.formula .small { font-size: 16px; }
.formula .thin { font-size: 17px; }
.intro { margin-bottom: 28px; color: #087508; font: italic 16px/22px "Liberation Sans", sans-serif; }
.intro b { color: #000; font-family: "Noto Sans", sans-serif; line-height: 1; }
.rule { font-style: italic; line-height: 26px; white-space: nowrap; }
.rule.alert { color: #d10b10; }
.rule.outlier { margin-top: 27px; }
.rule.answer { color: #087508; font-family: "Liberation Sans", sans-serif; }
.note-scroll { display: flex; flex-direction: column; align-items: center; width: 13px; padding: 4px 0; background: #ececec; }
.bar-thumb { flex: 0 0 294px; width: 9px; margin: 6px 0 auto; background: #a9a9a9; }
.graphs { display: grid; grid-template-rows: 256fr 197fr; gap: 11px; margin: 7px 0 2px; }
.graph { position: relative; min-height: 0; background: #fff; }
.graph > svg { width: 100%; height: 100%; }
.plot { font: 17px "Liberation Serif", serif; }
.plot .it { font-size: 16px; font-style: italic; }
.plot .caption { font-size: 16px; }
.sliders { position: absolute; top: 5px; right: 16px; width: 76px; color: #555; font: 11px/12px "Liberation Serif", serif; }
.sliders label { display: block; padding-left: 5px; }
.sliders input { display: block; width: 70px; height: 14px; margin: 2px 0 1px 2px; appearance: none; background: linear-gradient(#555, #555) center 10px / 100% 1px no-repeat; }
.sliders input::-webkit-slider-thumb { width: 9px; height: 14px; appearance: none; background: #444; clip-path: polygon(0 0, 100% 0, 100% 75%, 50% 100%, 0 75%); }
.limits { display: flex; justify-content: space-between; margin-bottom: 2px; }
.scrollbar { display: flex; flex-direction: column; width: 12px; background: #e7e7e7; }
.scrollbar button { height: 13px; border: 1px solid #bbb; background: #fff; }
.track { flex: 1; background: linear-gradient(90deg, #868b85, #bbb); }
.track span { display: block; height: 50%; border: 1px solid #c5c5c5; background: repeating-linear-gradient(#777 0 1px, #fff 1px 3px) center / 7px 7px no-repeat, linear-gradient(90deg, #fff, #ddd); }
.doc-tabs { display: flex; align-items: flex-start; justify-content: space-between; height: 20px; padding: 0 5px 0 3px; background: #efefef; }
.doc-tab { height: 18px; gap: 1px; padding: 0 4px 0 8px; border: 1px solid #a6a6a6; border-radius: 0 0 3px 3px; background: linear-gradient(#f4f4f4, #d8d8d8); }
.doc-tab span { margin-left: 6px; font-weight: 700; }
.tab-nav { display: flex; align-items: center; gap: 7px; height: 20px; }

.status { display: flex; align-items: center; justify-content: flex-end; height: 17px; padding-right: 2px; border-top: 1px solid #b6b6b6; background: linear-gradient(#efefef, #ddd); white-space: nowrap; }
.status > span { padding: 0 8px; border-left: 1px solid #bbb; line-height: 12px; }
.status .settings { padding-right: 11px; }
.status .angle { padding-right: 4px; }
.zoom { display: flex; align-items: center; gap: 4px; padding: 0 4px 0 7px; }
.zoom.muted { border-left: 1px solid #bbb; color: #a4a4a4; }
.zoom select { width: 47px; height: 14px; }
.zoom.muted select { background-color: #e8e8e8; opacity: 1; }
.zoom button { width: 15px; font-weight: 700; }
.fit { width: 18px; height: 14px; border: 1px solid #bbb; border-radius: 2px; }
.zoom:last-child { padding-right: 0; }

.dock-area { position: relative; display: flex; justify-content: center; padding: 2px 8px 5px; background: repeating-linear-gradient(18deg, rgba(145, 166, 178, .15) 0 1px, transparent 1px 4px) right / 25% 100% no-repeat, linear-gradient(90deg, #04111a, #071925 70%, #1c303c); }
.dock { display: flex; gap: 11px; height: 51px; padding: 7px; border-radius: 12px; background: linear-gradient(90deg, #52646f, #667c87 55%, #71838d); }
.app { position: relative; width: 33px; height: 33px; }
.app svg { width: 100%; height: 100%; overflow: visible; }
.app.capture svg { width: 37px; height: 38px; }
.running::after { position: absolute; bottom: -10px; left: 15px; width: 4px; height: 4px; border-radius: 50%; background: #080e13; content: ""; }
.dock hr { width: 1px; height: 38px; margin: 0 5px; border: 0; background: #425965; }
.calendar { flex-direction: column; justify-content: flex-start; overflow: hidden; border-radius: 7px; background: #f5f5f4; color: #333; font: 300 20px/22px Inter, sans-serif; }
.calendar small { width: 100%; background: #e55252; color: #fff; font-size: 7px; font-weight: 500; line-height: 11px; }
.badge { position: absolute; top: -5px; right: -6px; width: 16px; height: 16px; border-radius: 50%; background: #e14b42; color: #fff; font-size: 9px; line-height: 16px; }
.tv { fill: #fff; font: 12px Inter, sans-serif; }
.cas { fill: #fff; font: italic 700 7px "Liberation Sans", sans-serif; }
.watermark { position: absolute; top: 9px; left: 13px; color: #fff; font-size: 9px; font-weight: 700; line-height: 14px; }
.watermark strong { display: flex; align-items: center; gap: 5px; font-size: 14px; line-height: 24px; }
.watermark strong svg { width: 28px; height: 28px; margin-top: -3px; }
```
